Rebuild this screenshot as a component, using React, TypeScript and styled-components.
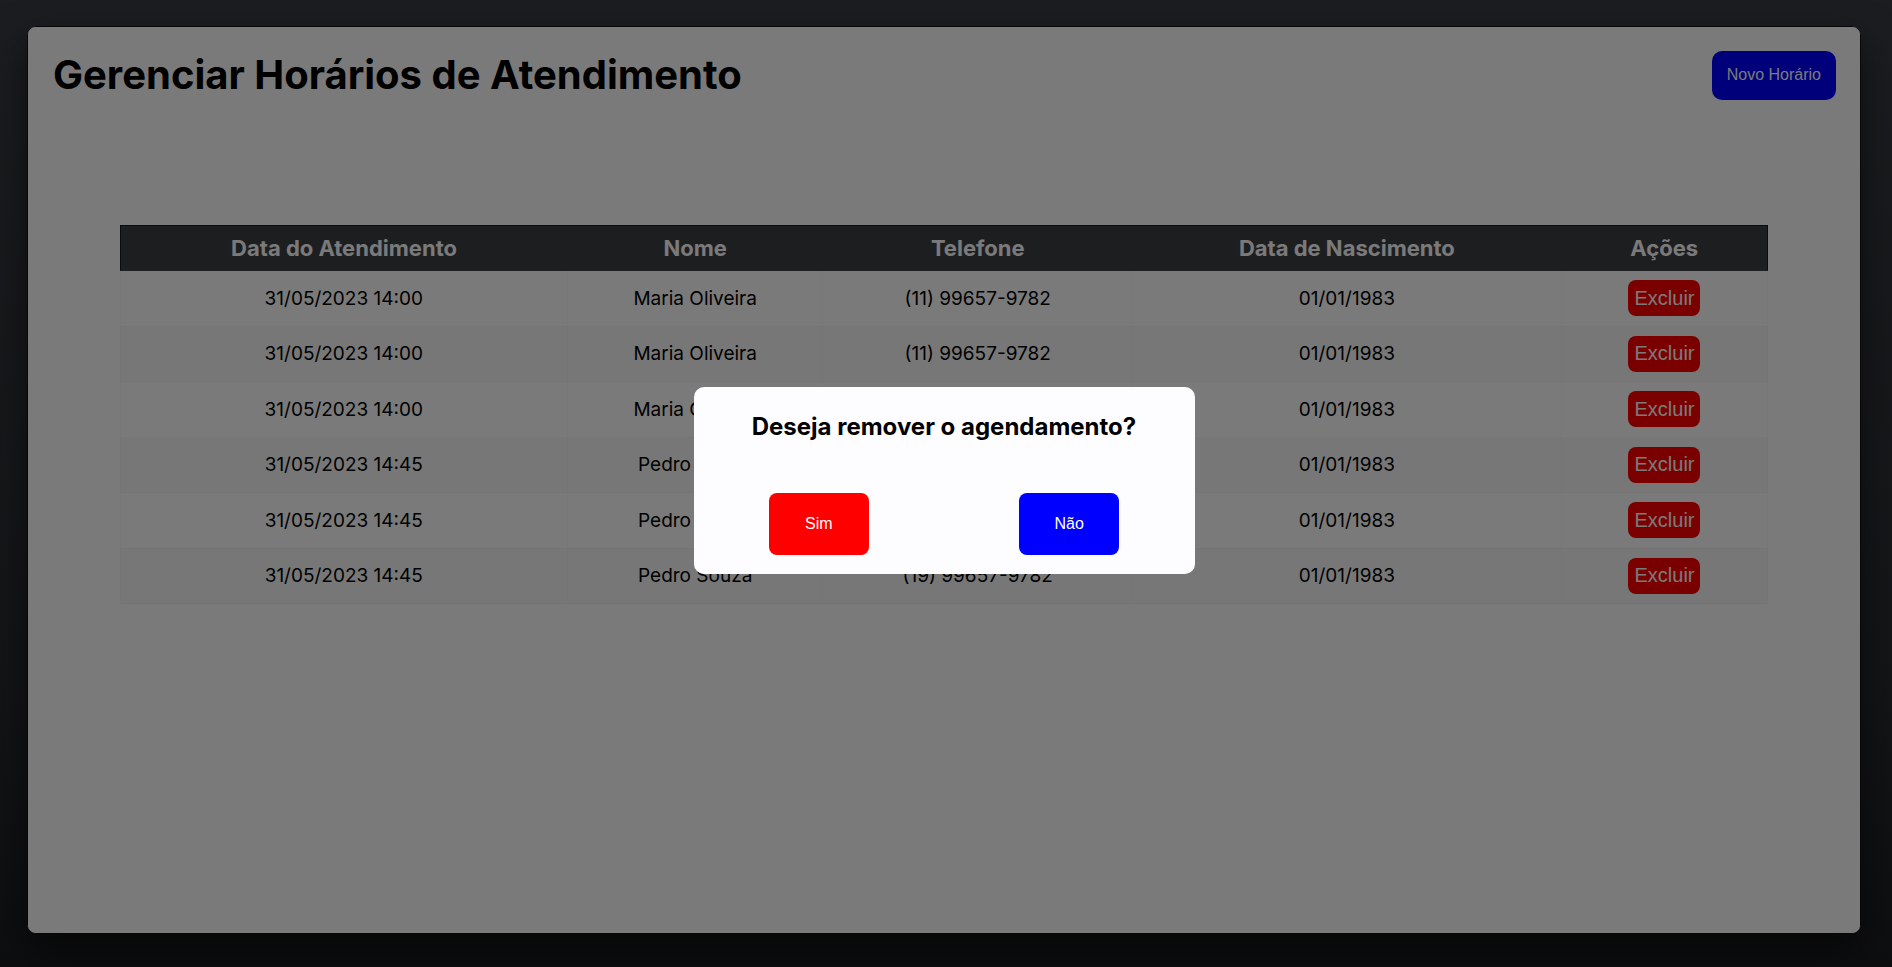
import React from "react";
import styled, { createGlobalStyle } from "styled-components";

const Global = createGlobalStyle`
  html, body { margin: 0; padding: 0; }
  body {
    background: linear-gradient(180deg, #1c1d20 0%, #141517 70%, #0d0e0f 100%);
    font-family: Inter, "Noto Sans", sans-serif;
    min-height: 967px;
  }
  * { box-sizing: border-box; }
`;

const Page = styled.div`
  display: flex;
  padding: 26px 31px 33px 27px;
  height: 967px;
`;

const Card = styled.section`
  position: relative;
  flex: 1;
  background: #ffffff;
  border: 1px solid #070707;
  border-radius: 9px;
  padding: 24px 0;
  box-shadow: 0 18px 40px rgba(0, 0, 0, 0.55);
`;

const Header = styled.header`
  display: flex;
  justify-content: space-between;
  align-items: flex-start;
  padding: 0 24px;
`;

const Title = styled.h1`
  margin: 0;
  font-size: 40px;
  font-weight: 700;
  color: #000;
  line-height: 48px;
  padding-left: 1px;
`;

const PrimaryButton = styled.button`
  font-family: "Liberation Sans", Arial, sans-serif;
  font-size: 16px;
  line-height: 18px;
  padding: 15px 15px 16px;
  border: none;
  border-radius: 10px;
  background: #0000ff;
  color: #ffffff;
`;

const Table = styled.table`
  width: 90%;
  margin: 125px auto 0;
  border-collapse: collapse;
  text-align: center;
`;

const HeadRow = styled.tr`
  background: #3e4044;
  border: 1px solid #1a1a1a;
`;

const Th = styled.th`
  font-size: 22px;
  font-weight: 700;
  color: #ffffff;
  height: 45px;
  padding: 0 8px;
`;

const Row = styled.tr<{ $striped: boolean }>`
  background: ${(p) => (p.$striped ? "#f9f9f9" : "transparent")};
`;

const Td = styled.td`
  font-size: 19px;
  color: #000;
  height: 55.5px;
  padding: 0 8px;
  border: 1px solid rgba(0, 0, 0, 0.015);
`;

const DangerButton = styled.button`
  font-family: "Liberation Sans", Arial, sans-serif;
  font-size: 20px;
  line-height: 23px;
  padding: 6.5px 6px;
  border: none;
  border-radius: 8px;
  background: #ff0000;
  color: #ffffff;
  display: block;
  margin: 0 auto;
`;

const Overlay = styled.div`
  position: absolute;
  inset: 0;
  border-radius: 8px;
  background: rgba(0, 0, 0, 0.52);
  display: flex;
  align-items: center;
  justify-content: center;
`;

const Modal = styled.div`
  width: 501px;
  height: 187px;
  background: #fdfdff;
  border-radius: 10px;
  padding: 25px 0 19px;
  display: flex;
  flex-direction: column;
`;

const ModalTitle = styled.h2`
  margin: 0;
  text-align: center;
  font-size: 24px;
  line-height: 29px;
  font-weight: 700;
  color: #000;
`;

const ModalActions = styled.div`
  margin-top: auto;
  display: flex;
  justify-content: space-around;
`;

const ModalButton = styled.button<{ $color: string }>`
  width: 100px;
  height: 62px;
  border: none;
  border-radius: 8px;
  background: ${(p) => p.$color};
  color: #ffffff;
  font-family: "Liberation Sans", Arial, sans-serif;
  font-size: 16px;
`;

const rows = [
  ["31/05/2023 14:00", "Maria Oliveira", "(11) 99657-9782", "01/01/1983"],
  ["31/05/2023 14:00", "Maria Oliveira", "(11) 99657-9782", "01/01/1983"],
  ["31/05/2023 14:00", "Maria Oliveira", "(11) 99657-9782", "01/01/1983"],
  ["31/05/2023 14:45", "Pedro Souza", "(19) 99657-9782", "01/01/1983"],
  ["31/05/2023 14:45", "Pedro Souza", "(19) 99657-9782", "01/01/1983"],
  ["31/05/2023 14:45", "Pedro Souza", "(19) 99657-9782", "01/01/1983"],
];

const colWidths = ["27.15%", "15.5%", "18.8%", "26%", "12.55%"];

export default function App() {
  return (
    <>
      <Global />
      <Page>
        <Card>
          <Header>
            <Title>Gerenciar Horários de Atendimento</Title>
            <PrimaryButton>Novo Horário</PrimaryButton>
          </Header>
          <Table>
            <colgroup>
              {colWidths.map((w, i) => (
                <col key={i} style={{ width: w }} />
              ))}
            </colgroup>
            <thead>
              <HeadRow>
                <Th>Data do Atendimento</Th>
                <Th>Nome</Th>
                <Th>Telefone</Th>
                <Th>Data de Nascimento</Th>
                <Th>Ações</Th>
              </HeadRow>
            </thead>
            <tbody>
              {rows.map((r, i) => (
                <Row key={i} $striped={i % 2 === 1}>
                  {r.map((c, j) => (
                    <Td key={j}>{c}</Td>
                  ))}
                  <Td>
                    <DangerButton>Excluir</DangerButton>
                  </Td>
                </Row>
              ))}
            </tbody>
          </Table>
          <Overlay>
            <Modal>
              <ModalTitle>Deseja remover o agendamento?</ModalTitle>
              <ModalActions>
                <ModalButton $color="#ff0000">Sim</ModalButton>
                <ModalButton $color="#0000ff">Não</ModalButton>
              </ModalActions>
            </Modal>
          </Overlay>
        </Card>
      </Page>
    </>
  );
}
